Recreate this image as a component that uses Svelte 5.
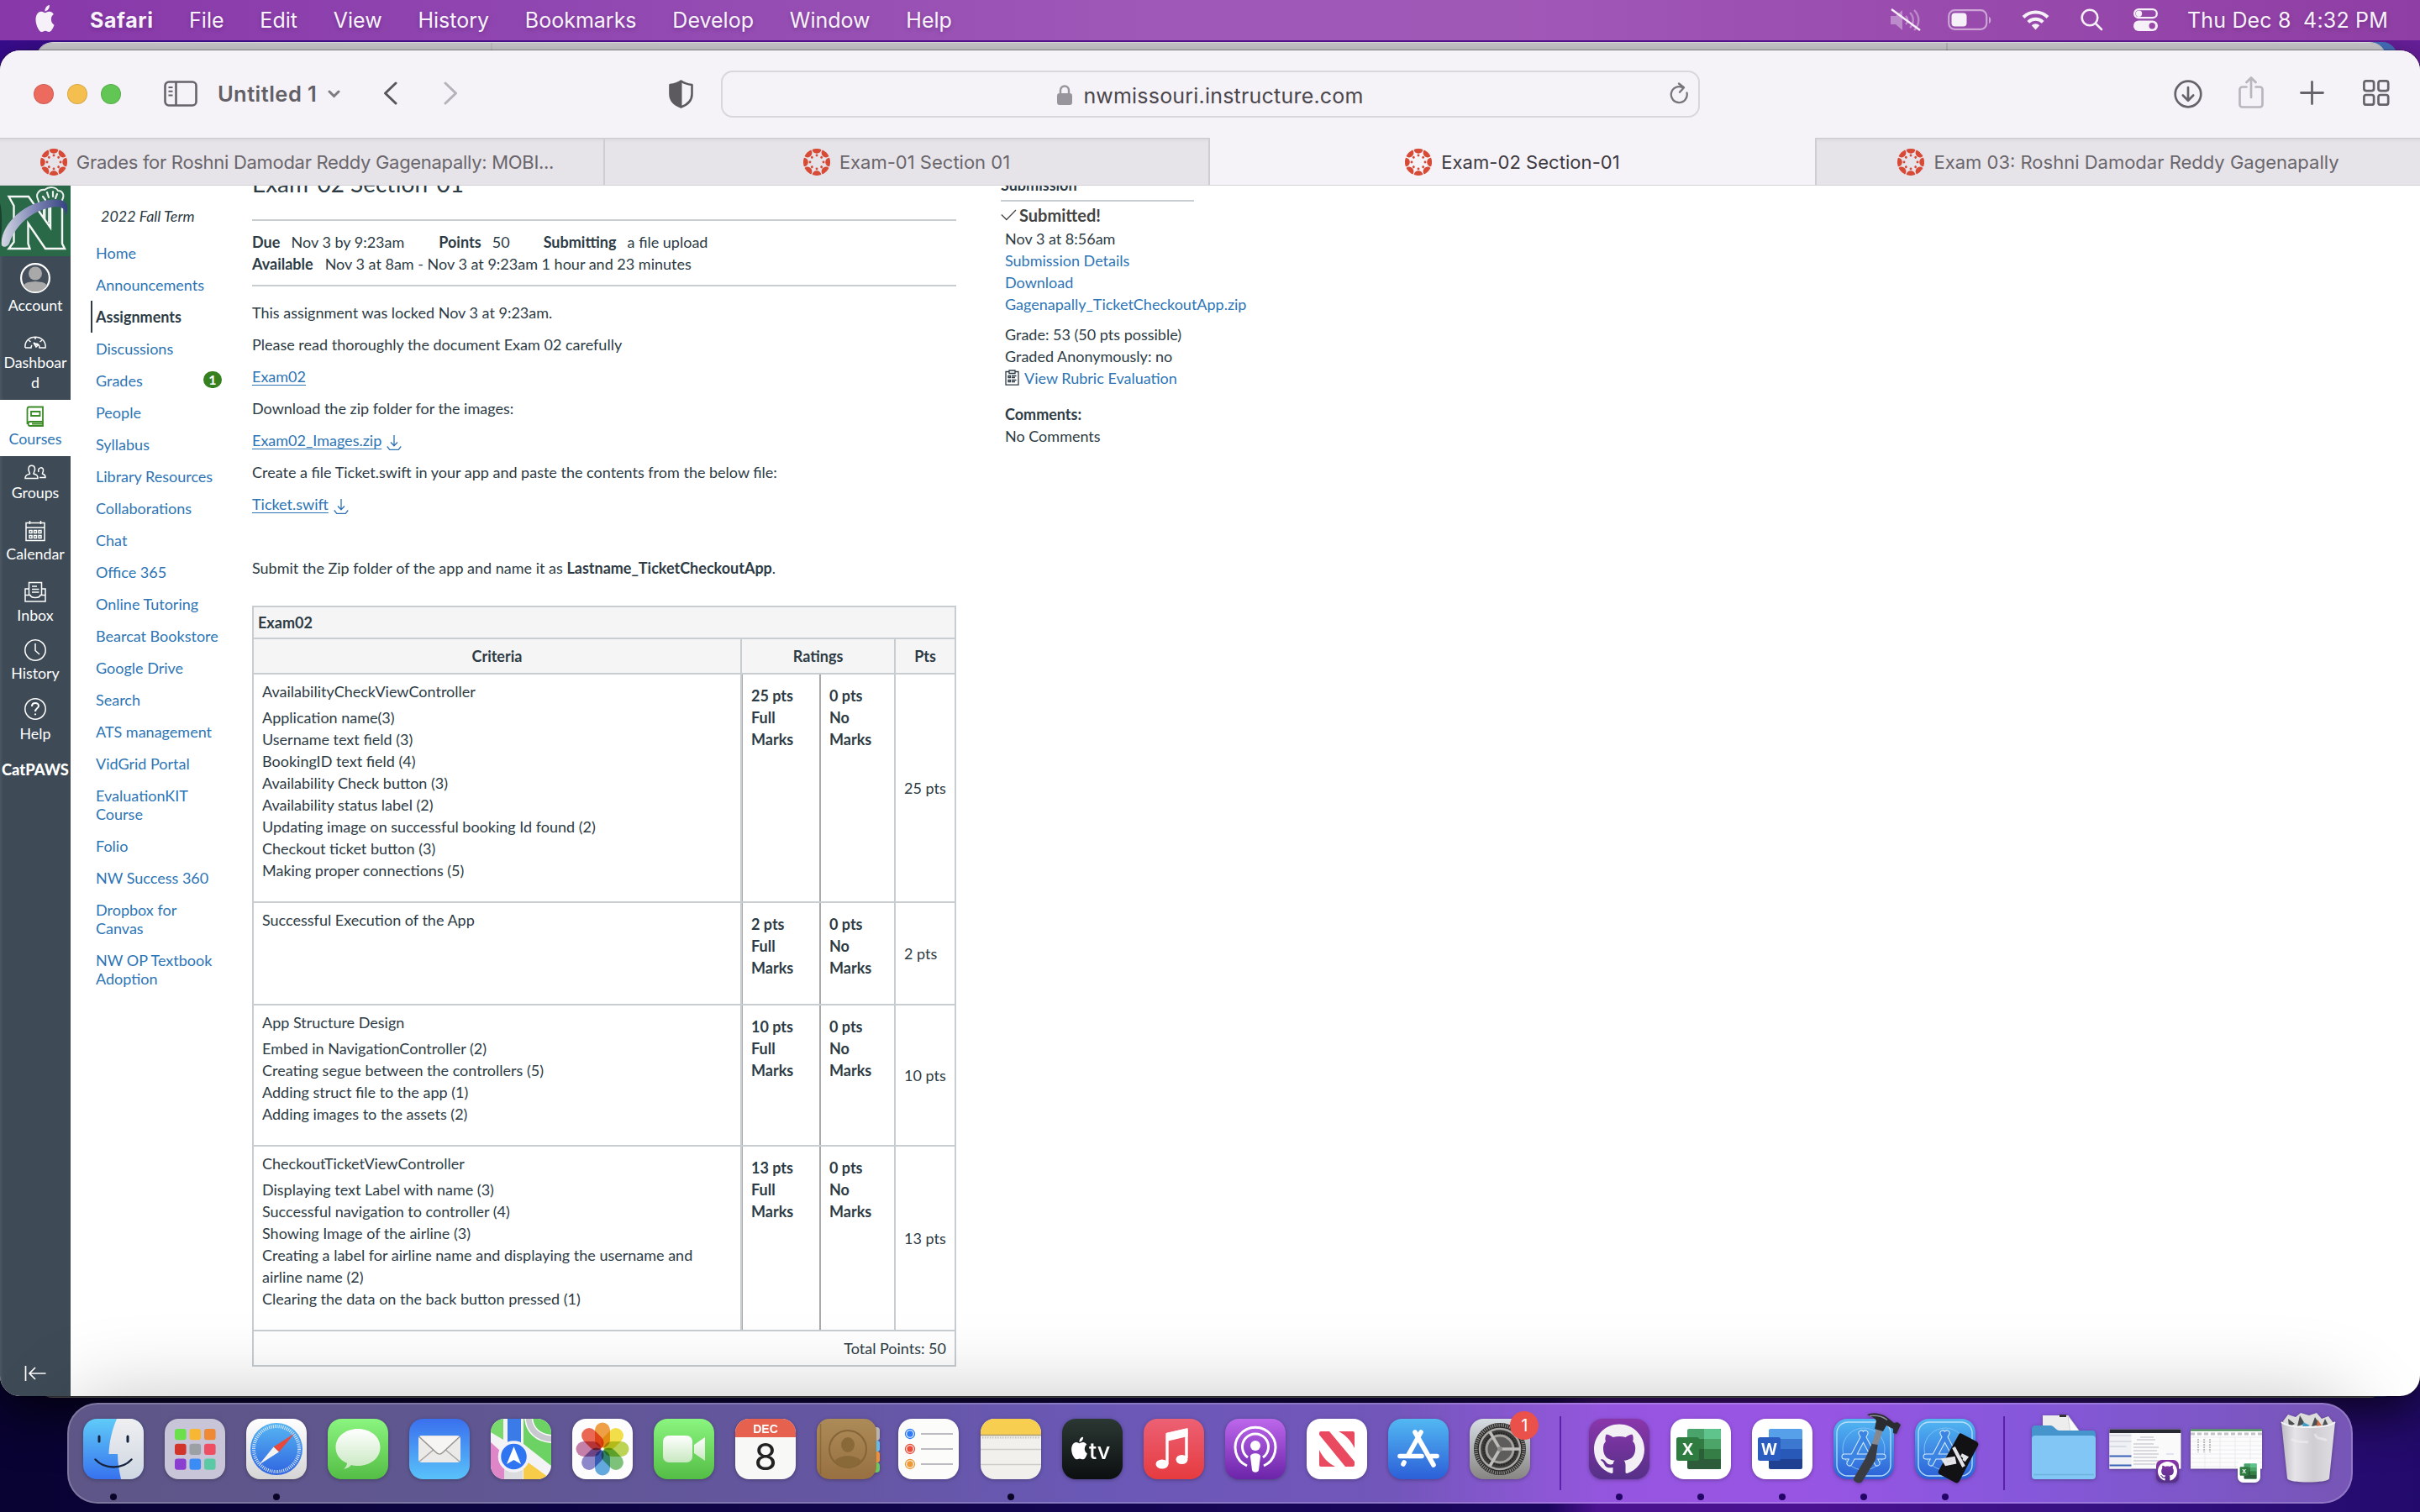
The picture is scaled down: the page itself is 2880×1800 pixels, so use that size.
<script>
  const menus = ['File', 'Edit', 'View', 'History', 'Bookmarks', 'Develop', 'Window', 'Help'];

  const tabs = [
    { title: 'Grades for Roshni Damodar Reddy Gagenapally: MOBI...', cls: 'tight' },
    { title: 'Exam-01 Section 01', cls: '' },
    { title: 'Exam-02 Section-01', cls: 'active' },
    { title: 'Exam 03: Roshni Damodar Reddy Gagenapally', cls: '' }
  ];

  const courseNav = [
    'Home', 'Announcements', 'Assignments', 'Discussions', 'Grades', 'People', 'Syllabus',
    'Library Resources', 'Collaborations', 'Chat', 'Office 365', 'Online Tutoring',
    'Bearcat Bookstore', 'Google Drive', 'Search', 'ATS management', 'VidGrid Portal',
    'EvaluationKIT Course', 'Folio', 'NW Success 360', 'Dropbox for Canvas', 'NW OP Textbook Adoption'
  ];

  const rubric = [
    {
      title: 'AvailabilityCheckViewController', pts: 25,
      lines: ['Application name(3)', 'Username text field (3)', 'BookingID text field (4)', 'Availability Check button (3)',
        'Availability status label (2)', 'Updating image on successful booking Id found (2)', 'Checkout ticket button (3)', 'Making proper connections (5)']
    },
    { title: 'Successful Execution of the App', pts: 2, lines: [] },
    {
      title: 'App Structure Design', pts: 10,
      lines: ['Embed in NavigationController (2)', 'Creating segue between the controllers (5)', 'Adding struct file to the app (1)', 'Adding images to the assets (2)']
    },
    {
      title: 'CheckoutTicketViewController', pts: 13,
      lines: ['Displaying text Label with name (3)', 'Successful navigation to controller (4)', 'Showing Image of the airline (3)',
        'Creating a label for airline name and displaying the username and airline name (2)', 'Clearing the data on the back button pressed (1)']
    }
  ];

  const eighths = [0, 45, 90, 135, 180, 225, 270, 315];
  const petals = ['#f0932b', '#f2dc2e', '#b5cf3f', '#6dbb6a', '#4f9fdc', '#7d79c4', '#c0709f', '#e9533b'];
  const tileColors = ['#6be04a', '#f7b732', '#ee8a35', '#d0342a', '#9aa0a3', '#ee4f63', '#8b3fd0', '#3c8cf5', '#5cc9a5'];
  const tiles = tileColors.map((color, i) => ({ color, x: 12 + (i % 3) * 17.5, y: 12 + Math.floor(i / 3) * 17.7 }));
</script>

{#snippet apple()}
  <path d="M12.152 6.896c-.948 0-2.415-1.078-3.96-1.04-2.04.027-3.91 1.183-4.961 3.014-2.117 3.675-.546 9.103 1.519 12.09 1.013 1.454 2.208 3.09 3.792 3.039 1.52-.065 2.09-.987 3.935-.987 1.831 0 2.35.987 3.96.948 1.637-.026 2.676-1.48 3.676-2.948 1.156-1.688 1.636-3.325 1.662-3.415-.039-.013-3.182-1.221-3.22-4.857-.026-3.04 2.48-4.494 2.597-4.559-1.429-2.09-3.623-2.324-4.39-2.376-2-.156-3.675 1.09-4.61 1.09zM15.53 3.83c.843-1.012 1.4-2.427 1.245-3.83-1.207.052-2.662.805-3.532 1.818-.78.896-1.454 2.338-1.273 3.714 1.338.104 2.715-.688 3.559-1.701" />
{/snippet}

{#snippet octocat()}
  <path d="M8 0C3.58 0 0 3.58 0 8c0 3.54 2.29 6.53 5.47 7.59.4.07.55-.17.55-.38 0-.19-.01-.82-.01-1.49-2.01.37-2.53-.49-2.69-.94-.09-.23-.48-.94-.82-1.13-.28-.15-.68-.52-.01-.53.63-.01 1.08.58 1.23.82.72 1.21 1.87.87 2.33.66.07-.52.28-.87.51-1.07-1.78-.2-3.64-.89-3.64-3.95 0-.87.31-1.59.82-2.15-.08-.2-.36-1.02.08-2.12 0 0 .67-.21 2.2.82.64-.18 1.32-.27 2-.27.68 0 1.36.09 2 .27 1.53-1.04 2.2-.82 2.2-.82.44 1.1.16 1.92.08 2.12.51.56.82 1.27.82 2.15 0 3.07-1.87 3.75-3.65 3.95.29.25.54.73.54 1.48 0 1.07-.01 1.93-.01 2.2 0 .21.15.46.55.38A8.013 8.013 0 0016 8c0-4.42-3.58-8-8-8z" />
{/snippet}

{#snippet favicon()}
  <svg class="favicon" width="32" height="32" viewBox="0 0 32 32" fill="#d64a36">
    {#each eighths as a}
      <g transform="rotate({a} 16 16)">
        <path d="M10.700 .9A16 16 0 0 1 21.300 .9A5.300 4.900 0 0 1 10.700 .9Z" />
        <circle cx="16" cy="8" r="1.450" />
      </g>
    {/each}
  </svg>
{/snippet}

{#snippet download()}
  <svg class="dl" width="18" height="20" viewBox="0 0 18 20" fill="none" stroke="#2d70b0" stroke-width="1.3">
    <path d="M9 1v12M5 9.5l4 4.2 4-4.2M.8 14.5l3 3.8h10.4l3-3.8" />
  </svg>
{/snippet}

{#snippet excelArt()}
  <path d="M22 12h38v48H22z" fill="#21a366" />
  <path d="M40 12h18a2 2 0 0 1 2 2v10H40z" fill="#5fc48c" />
  <path d="M20 14a2 2 0 0 1 2-2h18v12H20z" fill="#4aa36a" />
  <path d="M20 24h20v12H20z" fill="#317a44" /><path d="M40 24h20v12H40z" fill="#4da468" />
  <path d="M20 36h20v12H20z" fill="#2a5f38" /><path d="M40 36h20v12H40z" fill="#357e46" />
  <path d="M20 48h40v10a2 2 0 0 1-2 2H22a2 2 0 0 1-2-2z" fill="#2c5c3a" />
  <rect x="7" y="22" width="27" height="28" rx="2.5" fill="#2f7c41" />
  <text x="20.5" y="43" class="office">X</text>
{/snippet}

{#snippet blueprint()}
  <rect width="72" height="72" rx="16.500" fill="url(#store)" />
  <rect x="4" y="4" width="64" height="64" rx="13" fill="none" stroke="#b8dffa" stroke-width="1.300" />
  <circle cx="36" cy="36" r="25" fill="none" stroke="#7cc0f5" stroke-width="1" />
  <g fill="none" stroke="#d8eefc" stroke-width="7" stroke-linecap="round"><path d="M38 17L19 53M33 17l19 36M13 45h46" /></g>
  <g fill="none" stroke="#3b84e3" stroke-width="5" stroke-linecap="round"><path d="M38 17L19 53M33 17l19 36M13 45h46" /></g>
{/snippet}

<div class="desktop">
  <header class="menubar">
    <svg class="apple" width="27" height="32" viewBox="0 0 24 24" preserveAspectRatio="none" fill="#f6f0f8">{@render apple()}</svg>
    <b class="app">Safari</b>
    {#each menus as m}<span class="menu">{m}</span>{/each}
    <div class="status">
      <svg width="40" height="30" viewBox="0 0 40 30">
        <g fill="#fff" opacity=".35"><path d="M2 10h6l8-7v24l-8-7H2z" /></g>
        <g fill="none" stroke="#fff" stroke-width="2.4" opacity=".35"><path d="M20 10c3 3 3 7 0 10M25 6c5 5 5 13 0 18M30 3c7 7 7 17 0 24" /></g>
        <path d="M3 2l34 25" stroke="#f6f0f8" stroke-width="2.4" />
      </svg>
      <svg class="battery" width="52" height="26" viewBox="0 0 52 26">
        <rect x="1.2" y="1.2" width="45" height="22.6" rx="7" fill="none" stroke="#fff" stroke-width="2.2" opacity=".5" />
        <path d="M49 9c3 1 3 7 0 8z" fill="#fff" opacity=".5" />
        <rect x="4.5" y="4.5" width="18" height="16" rx="4" fill="#f6f0f8" />
      </svg>
      <svg class="wifi" width="33" height="25" viewBox="0 0 33 25" fill="none" stroke="#f6f0f8" stroke-width="4">
        <path d="M2 9.5a20.5 20.5 0 0 1 29 0M7.8 15.3a12.3 12.3 0 0 1 17.4 0" />
        <path d="M16.5 24.5l-4.7-5.2a6.6 6.6 0 0 1 9.4 0z" fill="#f6f0f8" stroke="none" />
      </svg>
      <svg class="find" width="27" height="27" viewBox="0 0 27 27" fill="none" stroke="#f6f0f8" stroke-width="2.6" stroke-linecap="round">
        <circle cx="11" cy="11" r="9.3" /><path d="M18 18l7 7" />
      </svg>
      <svg class="control" width="29" height="27" viewBox="0 0 29 27">
        <rect x="1.2" y="1.2" width="26.6" height="10" rx="5" fill="none" stroke="#f6f0f8" stroke-width="2.3" />
        <circle cx="6.5" cy="6.2" r="3.7" fill="#f6f0f8" />
        <rect x="0" y="14.5" width="29" height="12.5" rx="6.2" fill="#f6f0f8" />
        <circle cx="22.2" cy="20.7" r="3.7" fill="#9946ab" />
      </svg>
      <span class="clock">Thu Dec 8&nbsp; 4:32 PM</span>
    </div>
  </header>

  <div class="rear-edge"></div>
  <div class="rear"><i class="rear-a"></i><i class="rear-b"></i><i class="rear-c"></i></div>

  <section class="window">
    <div class="toolbar">
      <div class="left-tools">
        <i class="light red"></i><i class="light amber"></i><i class="light green"></i>
        <svg class="sidebar-ic" width="40" height="31" viewBox="0 0 40 31" fill="none" stroke="#67636a" stroke-width="2.6">
          <rect x="1.5" y="1.5" width="37" height="28" rx="4.5" /><path d="M14.5 2v27" /><path d="M5.5 8h5M5.5 12.7h5M5.5 17.4h5" stroke-width="2" />
        </svg>
        <span class="group">Untitled 1</span>
        <svg class="chev" width="15" height="10" viewBox="0 0 15 10" fill="none" stroke="#7d7a82" stroke-width="3" stroke-linecap="round"><path d="M2 2l5.5 5.5L13 2" /></svg>
        <svg class="back" width="17" height="28" viewBox="0 0 17 28" fill="none" stroke="#58555b" stroke-width="3" stroke-linecap="round" stroke-linejoin="round"><path d="M15 2L2.5 14 15 26" /></svg>
        <svg class="fwd" width="17" height="28" viewBox="0 0 17 28" fill="none" stroke="#b5b2b9" stroke-width="3" stroke-linecap="round" stroke-linejoin="round"><path d="M2 2l12.500 12L2 26" /></svg>
        <svg class="shield" width="29" height="34" viewBox="0 0 29 34">
          <path d="M14.500 1.500C18 4 23 5.500 27.500 6v11c0 7-5 12.500-13 15.500C6.500 29.500 1.500 24 1.500 17V6C6 5.500 11 4 14.500 1.500z" fill="none" stroke="#5c595f" stroke-width="2.600" stroke-linejoin="round" />
          <path d="M15.500 1.500v31C6.500 29.500 1.500 24 1.500 17V6C6 5.500 11 4 15.500 1.500z" fill="#5c595f" />
        </svg>
      </div>
      <div class="url">
        <svg class="lock" width="18" height="24" viewBox="0 0 18 24"><rect x="0" y="10" width="18" height="14" rx="3" fill="#98959c" /><path d="M4 11V6.500a5 5 0 0 1 10 0V11" fill="none" stroke="#98959c" stroke-width="2.400" /></svg>
        <span>nwmissouri.instructure.com</span>
        <svg class="reload" width="23" height="27" viewBox="0 0 23 27" fill="none" stroke="#77747b" stroke-width="2.300" stroke-linecap="round" stroke-linejoin="round"><path d="M20.500 12.500a9.500 9.500 0 1 1-5.500-6.600M11 1.500l6 4.700-5 5.500" /></svg>
      </div>
      <div class="right-tools">
        <svg width="34" height="34" viewBox="0 0 34 34" fill="none" stroke="#67636a" stroke-width="2.700" stroke-linecap="round" stroke-linejoin="round"><circle cx="17" cy="17" r="15.300" /><path d="M17 9v15.500M10.800 18.500l6.200 6.300 6.200-6.300" /></svg>
        <svg class="share" width="30" height="38" viewBox="0 0 30 38" fill="none" stroke="#b9b6bd" stroke-width="2.700" stroke-linecap="round" stroke-linejoin="round"><path d="M9.500 12.500H4.500a3 3 0 0 0-3 3v18a3 3 0 0 0 3 3h21a3 3 0 0 0 3-3v-18a3 3 0 0 0-3-3h-5M15 25V2M9.500 7L15 1.500 20.500 7" /></svg>
        <svg class="plus" width="29" height="29" viewBox="0 0 29 29" fill="none" stroke="#67636a" stroke-width="2.800" stroke-linecap="round"><path d="M14.500 1.500v26M1.500 14.500h26" /></svg>
        <svg class="grid4" width="32" height="31" viewBox="0 0 32 31" fill="none" stroke="#67636a" stroke-width="2.700"><rect x="1.400" y="1.400" width="11.700" height="11.700" rx="2.500" /><rect x="18.500" y="1.400" width="11.700" height="11.700" rx="2.500" /><rect x="1.400" y="18" width="11.700" height="11.700" rx="2.500" /><rect x="18.500" y="18" width="11.700" height="11.700" rx="2.500" /></svg>
      </div>
    </div>

    <div class="tabs">
      {#each tabs as t}
        <div class="tab {t.cls}">{@render favicon()}<span>{t.title}</span></div>
      {/each}
    </div>

    <div class="page">
      <nav class="global">
        <svg class="logo" width="84" height="85" viewBox="0 0 84 85">
          <rect width="84" height="85" fill="#296948" />
          <path d="M0 22c3 8 3 40-1 52z" fill="#1a4030" />
          <path d="M45 17c-3-6 2-12 8-11 6-5 14-3 16 1 6 0 8 6 5 11 1 4-1 7-1 9v20H52V26l-5-3z" fill="#2f6b4d" stroke="#e8efec" stroke-width="2" stroke-linejoin="round" />
          <path d="M51 14l3 4M56 9l2 6M63 8v6M68 11l-2 5" stroke="#e8efec" stroke-width="2.200" stroke-linecap="round" />
          <path d="M53.500 24v20M58 23v22" stroke="#e8efec" stroke-width="1.800" />
          <path d="M10.500 14H34l26 37V24h14v46l3 6H54L33.500 46v24l2 6H10.500l6-8V25z" fill="#296948" stroke="#f4f7f5" stroke-width="2.400" />
          <path d="M2 72C-1 50 28 18 66 17.500c14 0 17 8 12 20C79 26 70 25 60 27 38 31 18 48 11 70c-2 4-7 5-9 2z" fill="url(#swoosh)" />
        </svg>
        <span class="g account"><svg width="36" height="36" viewBox="0 0 36 36"><circle cx="18" cy="18" r="16.900" fill="#45505c" stroke="#fff" stroke-width="2.200" /><circle cx="18" cy="12.500" r="8" fill="#a9a9a9" /><path d="M4 27c3-5 8-4 14-5 6 1 11 0 14 5a17 17 0 0 1-28 0z" fill="#a9a9a9" /></svg><span>Account</span></span>
        <span class="g dashboard"><svg width="26" height="26" viewBox="0 0 26 26"><path d="M1 21C-1 4 27 4 25 21h-7c0-4-3-5-5-5M1 21h7c0-1 .3-2 1-3M13 8v3M5 12l2.500 2M21 12l-2.500 2M11 15l3 5 2-2z" /></svg><span>Dashboar<br />d</span></span>
        <span class="g courses"><svg width="26" height="26" viewBox="0 0 26 26"><path d="M5 1.500h17V19H6.500c-2.500 0-2.500 5 0 5H22v-5M3.500 22V4c0-1.500.5-2.500 2-2.500M8 7h10.500v5H8zM9 21.500h13" /></svg><span>Courses</span></span>
        <span class="g groups"><svg width="26" height="26" viewBox="0 0 26 26"><path d="M1 21.500c0-5 3-4 5.500-5.500 0-2-2-3-1.500-6 .3-5 7-5 7.500 0 .3 3-1.500 4-1.500 6 2.500 1.500 5 .5 5 5.500zM17 14c-2-6 6-7 5.500-2 0 2-1 2.500-1 4 2 1 3.500.5 3.500 4.500h-7" /></svg><span>Groups</span></span>
        <span class="g calendar"><svg width="26" height="26" viewBox="0 0 26 26"><path d="M2 3.500h22v21H2zM2 9h22M6.500 1v4M19.500 1v4M6 12.500h3v3H6zM11.500 12.500h3v3h-3zM17 12.500h3v3h-3zM6 18.500h3v3H6zM11.500 18.500h3v3h-3zM17 18.500h3v3h-3z" /></svg><span>Calendar</span></span>
        <span class="g inbox"><svg width="26" height="26" viewBox="0 0 26 26"><path d="M5.500 16V1.500h15V16M5.500 9H1v15h24V9h-4.500M1 16.500h6c1 4 11 4 12 0h6M9 6h6M9 9.500h8.500M9 13h8.500" /></svg><span>Inbox</span></span>
        <span class="g history"><svg width="26" height="26" viewBox="0 0 26 26"><circle cx="13" cy="13" r="12.200" /><path d="M13 5v8.500l5 4.500" /></svg><span>History</span></span>
        <span class="g help"><svg width="26" height="26" viewBox="0 0 26 26"><circle cx="13" cy="13" r="12.200" /><path d="M9 10c0-5.500 8-5 8-.8 0 3.300-4 3-4 6.800M13 18.500v1.800" stroke-width="2" /></svg><span>Help</span></span>
        <span class="catpaws">CatPAWS</span>
        <svg class="collapse" width="26" height="20" viewBox="0 0 26 20" fill="none" stroke="#fff" stroke-width="1.700"><path d="M1.500 1v18M25.500 10H6M13 3l-7 7 7 7" /></svg>
      </nav>

      <nav class="course">
        <em>2022 Fall Term</em>
        <ul>
          {#each courseNav as item}
            <li class:current={item === 'Assignments'}>
              <span>{item}</span>{#if item === 'Grades'}<b class="badge">1</b>{/if}
            </li>
          {/each}
        </ul>
      </nav>

      <main>
        <h1>Exam-02 Section-01</h1>
        <div class="details">
          <div class="drow"><b>Due</b><span class="due">Nov 3 by 9:23am</span><b>Points</b><span class="points">50</span><b>Submitting</b><span>a file upload</span></div>
          <div class="drow"><b>Available</b><span>Nov 3 at 8am - Nov 3 at 9:23am 1 hour and 23 minutes</span></div>
        </div>
        <div class="desc">
          <p>This assignment was locked Nov 3 at 9:23am.</p>
          <p>Please read thoroughly the document Exam 02 carefully</p>
          <p><a>Exam02</a></p>
          <p>Download the zip folder for the images:</p>
          <p><a>Exam02_Images.zip</a>{@render download()}</p>
          <p>Create a file Ticket.swift in your app and paste the contents from the below file:</p>
          <p><a>Ticket.swift</a>{@render download()}</p>
          <p>&nbsp;</p>
          <p>Submit the Zip folder of the app and name it as <b>Lastname_TicketCheckoutApp</b>.</p>
        </div>
        <div class="rubric">
          <div class="caption">Exam02</div>
          <div class="row head"><span>Criteria</span><span>Ratings</span><span>Pts</span></div>
          {#each rubric as r}
            <div class="row">
              <div class="crit">
                <div class="ctitle">{r.title}</div>
                {#each r.lines as l}<div>{l}</div>{/each}
              </div>
              <div class="ratings">
                <div class="full">{r.pts} pts<br />Full<br />Marks</div>
                <div class="none">0 pts<br />No<br />Marks</div>
              </div>
              <div class="pts">{r.pts} pts</div>
            </div>
          {/each}
          <div class="total">Total Points: 50</div>
        </div>
      </main>

      <aside>
        <h2>Submission</h2>
        <div class="submitted">
          <svg width="19" height="14" viewBox="0 0 19 14" fill="none" stroke="#444" stroke-width="1.300"><path d="M.8 6.500l6 6L18 1" /></svg>
          <b>Submitted!</b>
        </div>
        <div class="info">
          <div>Nov 3 at 8:56am</div>
          <a>Submission Details</a>
          <a>Download</a>
          <a>Gagenapally_TicketCheckoutApp.zip</a>
          <div class="grade">Grade: 53 (50 pts possible)</div>
          <div>Graded Anonymously: no</div>
          <a class="rub"><svg width="17" height="19" viewBox="0 0 17 19" fill="none" stroke="#2d3b45" stroke-width="1.300"><path d="M1 2.500h15v15.700H1z" /><path d="M5 4.500V1h7v3.500z" fill="#fff" /><path d="M4 7.500h2.500v2H4zM4 12.500h2.500v2H4zM8 7.500h5.500M8 9.500h4M8 12.500h5.500M8 14.500h4" /></svg><span>View Rubric Evaluation</span></a>
          <b class="comments">Comments:</b>
          <div>No Comments</div>
        </div>
      </aside>
    </div>
    <div class="dock-shade"><i></i></div>
  </section>

  <footer class="dock">
    <div class="cell run">
      <svg class="icon" viewBox="0 0 72 72">
        <defs>
          <clipPath id="sq"><rect width="72" height="72" rx="16.500" /></clipPath>
          <linearGradient id="blueDown" x2="0" y2="1"><stop stop-color="#5fcbf8" /><stop offset="1" stop-color="#3772ee" /></linearGradient>
          <linearGradient id="pale" x2="0" y2="1"><stop stop-color="#efeff1" /><stop offset="1" stop-color="#ced7e2" /></linearGradient>
          <linearGradient id="compass" x2="0" y2="1"><stop stop-color="#57b6f3" /><stop offset="1" stop-color="#2f64e0" /></linearGradient>
          <linearGradient id="whiteDown" x2="0" y2="1"><stop stop-color="#fff" /><stop offset="1" stop-color="#d5d5d5" /></linearGradient>
          <linearGradient id="greenDown" x2="0" y2="1"><stop stop-color="#8af57f" /><stop offset="1" stop-color="#54bd45" /></linearGradient>
          <linearGradient id="bubble" x2="0" y2="1"><stop stop-color="#fff" /><stop offset="1" stop-color="#c8e8c0" /></linearGradient>
          <linearGradient id="mail" x2="0" y2="1"><stop stop-color="#3a70ee" /><stop offset="1" stop-color="#59c2fa" /></linearGradient>
          <linearGradient id="redDown" x2="0" y2="1"><stop stop-color="#ec6174" /><stop offset="1" stop-color="#e63b3f" /></linearGradient>
          <linearGradient id="podcast" x2="0" y2="1"><stop stop-color="#bd67ec" /><stop offset="1" stop-color="#6b24a8" /></linearGradient>
          <linearGradient id="store" x2="0" y2="1"><stop stop-color="#52b8f2" /><stop offset="1" stop-color="#2c5fd8" /></linearGradient>
          <linearGradient id="steel" x2="0" y2="1"><stop stop-color="#d6dde3" /><stop offset="1" stop-color="#878582" /></linearGradient>
          <linearGradient id="github" x2="0" y2="1"><stop stop-color="#8a36ab" /><stop offset="1" stop-color="#553087" /></linearGradient>
          <linearGradient id="tvbg" x2="0" y2="1"><stop stop-color="#2b3733" /><stop offset="1" stop-color="#0c0f10" /></linearGradient>
          <linearGradient id="book" x2="0" y2="1"><stop stop-color="#ac8b58" /><stop offset="1" stop-color="#987041" /></linearGradient>
          <linearGradient id="bin"><stop stop-color="#bdbbc2" /><stop offset=".25" stop-color="#e6e4e8" /><stop offset=".6" stop-color="#cfcdd2" /><stop offset="1" stop-color="#e0dee3" /></linearGradient>
          <linearGradient id="swoosh"><stop stop-color="#d3d7e4" /><stop offset=".5" stop-color="#8087b6" /><stop offset="1" stop-color="#34427f" /></linearGradient>
        </defs>
        <g clip-path="url(#sq)">
          <rect width="72" height="72" fill="url(#blueDown)" />
          <path d="M40 0C34 14 31 28 30.500 42H41c0 10 2 21 4 30h27V0z" fill="url(#pale)" />
        </g>
        <path d="M19 21v6M53 21v6" stroke="#16233c" stroke-width="3" stroke-linecap="round" />
        <path d="M14.500 48.500c11 12 32 12 43 0" fill="none" stroke="#16233c" stroke-width="2.400" stroke-linecap="round" />
      </svg>
    </div>
    <div class="cell">
      <svg class="icon" viewBox="0 0 72 72">
        <rect width="72" height="72" rx="16.500" fill="#c9c5d8" />
        {#each tiles as t}<rect x={t.x} y={t.y} width="13.600" height="13.300" rx="3" fill={t.color} />{/each}
      </svg>
    </div>
    <div class="cell run">
      <svg class="icon" viewBox="0 0 72 72">
        <rect width="72" height="72" rx="16.500" fill="url(#whiteDown)" />
        <circle cx="36" cy="36" r="31" fill="url(#compass)" />
        <circle cx="36" cy="36" r="27" fill="none" stroke="#e8f2fd" stroke-width="4" stroke-dasharray=".9 1.456" />
        <path d="M57.500 17.500L32.500 33.500 39 39.500z" fill="#e8493c" /><path d="M15.500 54.500L32.500 33.500 39 39.500z" fill="#f3f3f3" />
      </svg>
    </div>
    <div class="cell">
      <svg class="icon" viewBox="0 0 72 72">
        <rect width="72" height="72" rx="16.500" fill="url(#greenDown)" />
        <path d="M36 12c15 0 26.500 9.500 26.500 22S51 56 36 56c-3 0-6-.4-8-1-2 2.500-5 4.500-9 4.800 2.500-2 4-4.500 4-7C14 49 9.500 42 9.500 34 9.500 21.500 21 12 36 12z" fill="url(#bubble)" />
      </svg>
    </div>
    <div class="cell">
      <svg class="icon" viewBox="0 0 72 72">
        <rect width="72" height="72" rx="16.500" fill="url(#mail)" />
        <rect x="11" y="20" width="50" height="32" rx="4" fill="#eceae8" />
        <path d="M12 51l18-15M60 51L42 36" stroke="#a8a5a2" stroke-width="1.500" />
        <path d="M12 21.500l20.500 19c2 2 5 2 7 0l20.500-19" fill="#f6f5f4" stroke="#96938f" stroke-width="1.500" />
      </svg>
    </div>
    <div class="cell">
      <svg class="icon" viewBox="0 0 72 72">
        <g clip-path="url(#sq)">
          <rect width="72" height="72" fill="#f3f3f5" />
          <path d="M0 6v10l15 9V0H6z" fill="#79d96c" />
          <path d="M39 0h33v56L39 30z" fill="#6dd264" />
          <path d="M0 28l22 20v24H0z" fill="#df86c9" />
          <path d="M16 48h22v24H16z" fill="#dcdce0" />
          <path d="M39 72V48l33 24z" fill="#f6cc48" />
          <path d="M20 0h16v50H20z" fill="#3b7be8" />
          <path d="M45-4c0 17 11 28 30 28" fill="none" stroke="#fff" stroke-width="10" /><path d="M45-4c0 17 11 28 30 28" fill="none" stroke="#c8c8cf" stroke-width="7" />
        </g>
        <circle cx="27.500" cy="45" r="17" fill="#2f74f0" stroke="#f2f2f8" stroke-width="3.500" />
        <path d="M27.500 33l8.500 21-8.500-5-8.500 5z" fill="#fff" />
      </svg>
    </div>
    <div class="cell">
      <svg class="icon" viewBox="0 0 72 72">
        <rect width="72" height="72" rx="16.500" fill="#fdfdfd" />
        {#each petals as color, i}<rect class="petal" x="27" y="4.500" width="18" height="30" rx="9" fill={color} transform="rotate({i * 45} 36 36)" />{/each}
        <circle cx="36" cy="36" r="1.500" fill="#fff" />
      </svg>
    </div>
    <div class="cell">
      <svg class="icon" viewBox="0 0 72 72">
        <rect width="72" height="72" rx="16.500" fill="url(#greenDown)" />
        <rect x="11" y="20" width="35" height="32" rx="7" fill="url(#bubble)" /><path d="M48 31l13-9v28l-13-9z" fill="url(#bubble)" />
      </svg>
    </div>
    <div class="cell">
      <svg class="icon" viewBox="0 0 72 72">
        <g clip-path="url(#sq)"><rect width="72" height="72" fill="#f8f8f7" /><rect width="72" height="22" fill="#e7614f" /></g>
        <text x="36" y="17" class="month">DEC</text><text x="36" y="61" class="day">8</text>
      </svg>
    </div>
    <div class="cell">
      <svg class="icon" viewBox="0 0 72 72">
        <rect x="62" y="10" width="13" height="16" rx="4" fill="#b9b5ae" /><rect x="62" y="26" width="13" height="13" rx="3" fill="#63bbe8" /><rect x="62" y="39" width="13" height="13" rx="3" fill="#ee9035" /><rect x="62" y="52" width="13" height="12" rx="4" fill="#6bc85c" />
        <rect width="71" height="72" rx="15" fill="url(#book)" /><path d="M4.500 6v60" stroke="#7d5c30" stroke-width="1.500" opacity=".6" />
        <circle cx="37" cy="36" r="22" fill="none" stroke="#856537" stroke-width="2" /><ellipse cx="37" cy="31" rx="8" ry="9" fill="#8a6938" /><path d="M21 51c4-9 28-9 32 0a22 22 0 0 1-32 0z" fill="#8a6938" />
      </svg>
    </div>
    <div class="cell">
      <svg class="icon" viewBox="0 0 72 72">
        <rect width="72" height="72" rx="16.500" fill="#fcfcfb" />
        <g fill="none" stroke-width="1.300"><circle cx="14" cy="18" r="5.500" stroke="#2f7cf6" /><circle cx="14" cy="36" r="5.500" stroke="#e8503c" /><circle cx="14" cy="54" r="5.500" stroke="#ec9936" /></g>
        <circle cx="14" cy="18" r="3.700" fill="#2f7cf6" /><circle cx="14" cy="36" r="3.700" fill="#e8503c" /><circle cx="14" cy="54" r="3.700" fill="#ec9936" />
        <path d="M27 18h38M27 36h38M27 54h38" stroke="#bcbbbf" stroke-width="2" />
      </svg>
    </div>
    <div class="cell run">
      <svg class="icon" viewBox="0 0 72 72">
        <g clip-path="url(#sq)"><rect width="72" height="72" fill="#f1f0ed" /><rect width="72" height="19" fill="#f8ce51" /><path d="M0 19.500h72" stroke="#a99d77" stroke-width="1.500" /></g>
        <path d="M2 22.500h68" stroke="#c5c3bd" stroke-width="2" stroke-dasharray="1.500 1.500" /><path d="M0 36.500h72M0 54.500h72" stroke="#cdccc8" stroke-width="1.500" />
      </svg>
    </div>
    <div class="cell">
      <svg class="icon" viewBox="0 0 72 72">
        <rect width="72" height="72" rx="16.500" fill="url(#tvbg)" />
        <svg x="9" y="21.500" width="23" height="27" viewBox="0 0 24 24" preserveAspectRatio="none" fill="#fff">{@render apple()}</svg>
        <text x="32" y="47.500" class="tv">tv</text>
      </svg>
    </div>
    <div class="cell">
      <svg class="icon" viewBox="0 0 72 72">
        <rect width="72" height="72" rx="16.500" fill="url(#redDown)" />
        <path d="M28 54V18.500l23-5V47" fill="none" stroke="#fff" stroke-width="3.400" stroke-linejoin="round" /><path d="M27 17l25.500-6v10L27 27z" fill="#fff" />
        <ellipse cx="22" cy="54" rx="7.500" ry="5.500" fill="#fff" /><ellipse cx="45.500" cy="48.500" rx="7" ry="5.500" fill="#fff" />
      </svg>
    </div>
    <div class="cell">
      <svg class="icon" viewBox="0 0 72 72">
        <rect width="72" height="72" rx="16.500" fill="url(#podcast)" />
        <g fill="none" stroke="#fff" stroke-width="3"><path d="M26 56a24 24 0 1 1 20 0" /><path d="M27 46a15.500 15.500 0 1 1 18 0" /></g>
        <circle cx="36" cy="32" r="6" fill="#fff" /><path d="M30 45c0-5 12-5 12 0l-2 16c-.6 3.500-7.400 3.500-8 0z" fill="#fff" />
      </svg>
    </div>
    <div class="cell">
      <svg class="icon" viewBox="0 0 72 72">
        <rect width="72" height="72" rx="16.500" fill="#fff" />
        <path d="M15 17a2 2 0 0 1 2-2h10l30 36v4a2 2 0 0 1-2 2H46L15 19z" fill="#ea4a60" />
        <path d="M38 15h17a2 2 0 0 1 2 2v18C53 26 46 19 38 15zM34 57H17a2 2 0 0 1-2-2V37c4 9 11 16 19 20z" fill="#ea4a60" />
      </svg>
    </div>
    <div class="cell">
      <svg class="icon" viewBox="0 0 72 72">
        <rect width="72" height="72" rx="16.500" fill="url(#store)" />
        <g stroke="#fff" stroke-width="5.600" stroke-linecap="round"><path d="M39 16L24 43M32 16l22 39M14 44.500h26M51 44.500h7M19 52l-1 2" /></g>
      </svg>
    </div>
    <div class="cell">
      <svg class="icon" viewBox="0 0 72 72">
        <rect width="72" height="72" rx="16.500" fill="url(#steel)" />
        <circle cx="36" cy="36" r="31" fill="#2b2c2a" /><circle cx="36" cy="36" r="28.500" fill="#2b2c2a" stroke="#8f8e8a" stroke-width="4" stroke-dasharray="1.200 1.400" />
        <circle cx="36" cy="36" r="24" fill="#3b3b39" stroke="#a9a8a5" stroke-width="2.500" /><circle cx="36" cy="36" r="16" fill="#5d5d5b" stroke="#a3a29f" stroke-width="3" /><circle cx="36" cy="36" r="19" fill="none" stroke="#222" stroke-width="2" stroke-dasharray="1.500 1.500" />
        <path d="M36 36h24M36 36L24 15.500M36 36L24 56.500" stroke="#bebdba" stroke-width="3.500" /><circle cx="36" cy="36" r="3" fill="#8d8c8a" />
      </svg>
      <b class="notice">1</b>
    </div>
    <i class="sep"></i>
    <div class="cell run">
      <svg class="icon" viewBox="0 0 72 72">
        <rect width="72" height="72" rx="16.500" fill="url(#github)" />
        <svg x="6" y="6" width="60" height="61" viewBox="0 0 16 16" fill="#f2f0f5">{@render octocat()}</svg>
      </svg>
    </div>
    <div class="cell run">
      <svg class="icon" viewBox="0 0 72 72"><rect width="72" height="72" rx="16.500" fill="#fff" />{@render excelArt()}</svg>
    </div>
    <div class="cell run">
      <svg class="icon" viewBox="0 0 72 72">
        <rect width="72" height="72" rx="16.500" fill="#fff" />
        <path d="M20 14a2 2 0 0 1 2-2h36a2 2 0 0 1 2 2v10H20z" fill="#56a0ea" /><path d="M20 24h40v12H20z" fill="#3d78d0" /><path d="M20 36h40v12H20z" fill="#2858b8" /><path d="M20 48h40v10a2 2 0 0 1-2 2H22a2 2 0 0 1-2-2z" fill="#204191" />
        <rect x="7" y="22" width="27" height="28" rx="2.500" fill="#2b5cc0" /><text x="20.500" y="43" class="office">W</text>
      </svg>
    </div>
    <div class="cell run">
      <svg class="icon" viewBox="0 0 72 72">
        {@render blueprint()}
        <path d="M53 30L44 34 22 72c-1 3 6 6 8 3L50 50z" fill="none" />
        <path d="M50 34l-9 20-14 18" fill="none" stroke="none" />
        <path d="M46 29h7l-3 20-16 26c-3 3-11 0-10-4l14-24z" fill="#393c42" />
        <path d="M52 8l8 2-7 21-7-1z" fill="#85888e" />
        <path d="M40-5c9-3 19-1 26 5l6 5 4-1 4 3-5 11-4-1v-5l-8-4-4 7-10-3 2-10c-3-4-7-5-11-7z" fill="#2a2c30" />
        <path d="M43-3.500c8-1 15 0 21 5" stroke="#8b8f96" stroke-width="1.500" fill="none" />
      </svg>
    </div>
    <div class="cell run">
      <svg class="icon" viewBox="0 0 72 72">
        {@render blueprint()}
        <path d="M52 19c1-2 2-2 4-1l17 9c2 1 3 3 2 5L53 74c-1 2-3 3-5 2l-17-9c-3-1-4-3-3-5z" fill="#121214" />
        <path d="M46 34l12 23M55 43l6 3-3 4M34 49l12-2 1 5-10 2z" stroke="#e4e5e8" stroke-width="4" fill="#d6d7da" />
      </svg>
    </div>
    <i class="sep second"></i>
    <div class="cell">
      <svg class="icon" viewBox="0 0 72 72">
        <path d="M11 18V-4h30l16 26z" fill="#ededed" /><path d="M41-4l16 22H44z" fill="#fbfbfb" stroke="#c9c9c9" stroke-width=".8" /><path d="M31-5h8v3h-8z" fill="#333" />
        <path d="M-2 13c0-4 2-5 5-5h17c5 0 6 6 11 6h39c3 0 4 2 4 5v12H-2z" fill="#4594cb" />
        <rect x="-2" y="20" width="76" height="52" rx="4" fill="#82c6f5" /><path d="M0 66.500h72" stroke="#6fb2e0" stroke-width="1.500" />
      </svg>
    </div>
    <div class="cell">
      <svg class="icon" viewBox="0 0 72 72">
        <rect x="-6.500" y="12.500" width="85" height="47" fill="#fafafa" /><rect x="-6.500" y="12.500" width="85" height="4.500" fill="#272a33" />
        <path d="M-6.500 17h26v42.500h-26z" fill="#f0f1f5" /><path d="M-6.500 20h26M-6.500 27h26M-6.500 33h20" stroke="#b7bccd" stroke-width=".8" /><path d="M-6.500 44.500h26M-6.500 55.500h26" stroke="#3a62b8" stroke-width="2" />
        <path d="M30 22h16M26 25h22M22 30h24M22 34h30M22 38h28M22 42h30M22 46h28M22 50h30M22 54h26" stroke="#b6b9c2" stroke-width="1" /><path d="M61 42h9" stroke="#c6ccea" />
        <rect x="49" y="49" width="27" height="27" rx="6.500" fill="url(#github)" /><svg x="51" y="51" width="23" height="23" viewBox="0 0 16 16" fill="#fff">{@render octocat()}</svg>
      </svg>
    </div>
    <div class="cell">
      <svg class="icon" viewBox="0 0 72 72">
        <rect x="-7" y="12.500" width="85" height="47" fill="#fcfcfc" /><rect x="-7" y="12.500" width="85" height="2" fill="#2f7c41" /><path d="M-7 18h85" stroke="#c4c4c8" stroke-width="3" stroke-dasharray="5 3" /><path d="M-7 22h85M-7 27h85M-7 32h85M-7 37h85M-7 42h85M-7 47h85M-7 52h85M-7 57h85M10 22v37M28 22v37M46 22v37M64 22v37" stroke="#e9e9ec" stroke-width=".8" />
        <path d="M2 24v16M9 24v16M16 24v16" stroke="#888" stroke-width="1" stroke-dasharray="2 1" />
        <rect x="49" y="49" width="27" height="27" rx="6.500" fill="#fff" /><svg x="49" y="49" width="27" height="27" viewBox="0 0 72 72">{@render excelArt()}</svg>
      </svg>
    </div>
    <div class="cell">
      <svg class="icon" viewBox="0 0 72 72">
        <path d="M6 3l6-8 9 3 6-5 10 3 9-3 6 7 8-3 6 8-4 9H10z" fill="#dcdcda" />
        <path d="M12 0l8 6-7 4zM26-4l6 10-9 3zM44-2l6 9-10 2zM56 0l4 8-8 2z" fill="#4c4f52" /><path d="M30 4l8 4-9 3z" fill="#3ea0c8" /><path d="M47 1l5 7-6 1z" fill="#cf6a42" />
        <path d="M4 4c10 8 54 8 64 0l-7 67c-.5 6-49.500 6-50 0z" fill="url(#bin)" /><path d="M4 4c10 8 54 8 64 0" fill="none" stroke="#f4f4f6" stroke-width="2" />
        <path d="M16 24c8 6 14 2 20 4M44 18c2 8 10 4 14 8" stroke="#f0eff2" stroke-width="3" opacity=".6" fill="none" />
      </svg>
    </div>
  </footer>
</div>

<style>
  :global(body) { margin: 0; overflow: hidden; }
  .desktop {
    position: relative; width: 2880px; height: 1800px; overflow: hidden; box-sizing: border-box;
    font-family: Inter, "Liberation Sans", sans-serif; color: #2d3b45;
    background:
      linear-gradient(90deg, #3a0c92 0, #5c149a 30%, #5c149a 70%, #6b209f 100%) 0 0 / 100% 110px no-repeat,
      linear-gradient(90deg, #090333 0, #0b0440 20%, #13054f 45%, #1b065e 64%, #4b128f 66%, #4a1190 75%, #33107f 88%, #220a6b 100%);
  }
  svg { display: block; flex: none; }

  .menubar {
    height: 48px; display: flex; align-items: center; padding-left: 40px; position: relative; z-index: 2; box-sizing: border-box; padding-bottom: 1px;
    background: linear-gradient(90deg, #8838a9 0, #9148b1 25%, #9f58b7 48%, #a058b7 62%, #9748ab 85%, #8e3ea4 100%);
    color: #f8f3fa; font-size: 25px; text-shadow: 0 2px 5px rgba(60, 0, 80, .3);
  }
  .apple { margin: -4px 40px 0 0; }
  .app { font-weight: 700; letter-spacing: .6px; margin-right: 42.500px; }
  .menu { margin-right: 42.800px; white-space: nowrap; }
  .status { margin-left: auto; display: flex; align-items: center; padding-right: 38px; }
  .battery { margin-left: 30px; }
  .wifi { margin-left: 36px; }
  .find { margin-left: 37px; }
  .control { margin-left: 36px; }
  .clock { margin-left: 35px; letter-spacing: .18px; white-space: nowrap; }

  .rear-edge { position: absolute; left: 2700px; top: 50px; width: 153px; height: 1613px; border-radius: 18px; background: #4a76c6; }
  .rear { position: absolute; left: 43px; top: 50px; width: 2797px; height: 1614px; box-sizing: border-box; border-radius: 20px; overflow: hidden; background: #8f8f94; display: flex; border-top: 1px solid #f2f2f4; }
  .rear i { height: 40px; background: #dcdcdf; }
  .rear-a { width: 541px; border-right: 2px solid #cfcfd3; }
  .rear-b { width: 1730px; border-right: 2px solid #c4c4c8; }
  .rear-c { flex: 1; }

  .window { position: absolute; left: 0; top: 60px; width: 2880px; height: 1602px; border-radius: 24px; overflow: hidden; background: #fff; display: flex; flex-direction: column; box-shadow: 0 0 0 1px rgba(0, 0, 0, .3), 0 20px 60px rgba(0, 0, 0, .75); }
  .toolbar { height: 104px; flex: none; display: grid; grid-template-columns: 858px 1165px 857px; background: #f5f2f8; }
  .left-tools, .right-tools { display: flex; align-items: center; }
  .left-tools { padding-left: 39.500px; }
  .light { width: 24px; height: 24px; border-radius: 50%; margin-right: 16.300px; box-sizing: border-box; border: 1px solid rgba(0, 0, 0, .12); }
  .red { background: #ed6a5f; }
  .amber { background: #f5bf4f; }
  .green { background: #62c655; }
  .sidebar-ic { margin-left: 34.500px; margin-top: -2px; }
  .group { width: 120px; margin-left: 24px; font-size: 25.500px; font-weight: 600; color: #625f66; letter-spacing: .45px; white-space: nowrap; margin-top: -2px; }
  .chev { margin-left: 11px; }
  .back { margin-left: 51.500px; margin-top: -2px; }
  .fwd { margin-left: 55px; margin-top: -2px; }
  .shield { margin-left: 250.500px; }
  .url { position: relative; margin: 24px 0; border: 2px solid #d9d6dc; border-radius: 14px; box-sizing: border-box; display: flex; align-items: center; justify-content: center; gap: 13px; font-size: 25px; color: #4a474d; letter-spacing: .2px; }
  .url span { padding-top: 4px; }
  .lock { margin-top: 2px; }
  .reload { position: absolute; right: 11px; top: 12px; }
  .right-tools { padding-left: 563.500px; }
  .share { margin: -4px 0 0 43px; }
  .plus { margin-left: 43.500px; margin-top: -3px; }
  .grid4 { margin-left: 46px; margin-top: -3px; }

  .tabs { height: 57px; flex: none; display: flex; box-sizing: border-box; border-bottom: 1px solid #d5d2d7; position: relative; z-index: 1; }
  .tab { width: 720px; box-sizing: border-box; border-right: 2px solid #d0cdd2; display: flex; align-items: center; justify-content: center; gap: 11px; font-size: 22px; color: #69666c; background: linear-gradient(#c6c3c9 0, #dfdce1 2px, #e7e4e9 6px); white-space: nowrap; padding-top: 1px; }
  .tab.active { background: #f5f2f8; color: #3b383e; letter-spacing: .05px; border-right: 0; }
  .tab.tight { letter-spacing: -.3px; padding-right: 11px; }
  .tab:last-child { border-right: 0; border-left: 2px solid #d0cdd2; }

  .page { flex: 1; min-height: 0; display: flex; font-family: Lato, "Liberation Sans", sans-serif; font-size: 18px; line-height: 26px; overflow: hidden; }
  .global { width: 84px; flex: none; background: linear-gradient(90deg, #4a5763 0, #3e4b57 4px); color: #fff; display: flex; flex-direction: column; align-items: center; }
  .logo { margin-top: -1px; }
  .g { width: 84px; box-sizing: border-box; display: flex; flex-direction: column; align-items: center; gap: 2px; line-height: 24px; font-size: 17.800px; text-align: center; }
  .g svg { fill: none; stroke: #fff; stroke-width: 1.500; }
  .account { height: 84px; padding-top: 8px; }
  .account svg { stroke: none; }
  .dashboard { height: 87px; padding-top: 4px; gap: 0; }
  .courses { height: 67px; padding-top: 7px; gap: 1px; background: #fff; color: #2d75b5; }
  .courses svg { stroke: #3a8a25; stroke-width: 1.800; }
  .groups { height: 72px; padding-top: 5px; gap: 0; }
  .calendar { height: 74px; padding-top: 4px; }
  .inbox { height: 69px; padding-top: 3px; gap: 2px; }
  .history { height: 69px; padding-top: 3px; }
  .help { height: 77px; padding-top: 4px; gap: 4px; }
  .catpaws { line-height: 24px; font-family: Lato, sans-serif; font-weight: 900; font-size: 18.300px; height: 32px; }
  .collapse { margin-top: auto; margin-bottom: 17px; }

  .course { width: 198px; padding: 23px 0 0 24px; flex: none; box-sizing: border-box; font-size: 18px; line-height: 22px; }
  .course em { display: block; padding: 2px 0 14px 12px; font-size: 17.900px; }
  .course ul { list-style: none; margin: 0; padding: 0; }
  .course li { display: flex; align-items: center; padding: 8px 0 8px 4px; border-left: 2px solid transparent; color: #2d75b5; }
  .course li span { max-width: 148px; }
  .course li.current { border-color: #2d3b45; color: #2d3b45; font-weight: 700; }
  .badge { width: 22px; height: 20px; border-radius: 10px; background: #36801f; color: #fff; font-size: 16px; line-height: 19px; text-align: center; margin: -2px 18px 0 auto; }

  main { width: 838px; margin-left: 18px; flex: none; }
  h1 { margin: -21px 0 0; font-weight: 400; font-size: 28px; line-height: 36px; padding-bottom: 25px; height: 36px; }
  .details { border-top: 2px solid #c7cdd1; border-bottom: 2px solid #c7cdd1; padding: 12px 0 12px; }
  .drow { display: flex; height: 26px; white-space: pre; }
  .drow b { margin-right: 14px; }
  .drow:first-child b { margin-right: 13.200px; }
  .due { margin-right: 41px; }
  .points { margin-right: 40px; }
  .desc { padding-top: 18px; }
  p { margin: 0 0 12px; height: 26px; display: flex; white-space: pre; }
  a { color: #2d75b5; }
  p a { text-decoration: underline; text-decoration-thickness: 1px; text-underline-offset: 3px; }
  .dl { margin: 6px 0 0 6px; }

  .rubric { margin-top: 32px; border: 2px solid #c7cdd1; }
  .caption { height: 36px; line-height: 36px; padding-left: 5px; font-weight: 700; background: #f5f5f5; border-bottom: 2px solid #c7cdd1; }
  .row { display: grid; grid-template-columns: 581px 183px 70px; border-bottom: 2px solid #c7cdd1; }
  .head { height: 40px; line-height: 41px; background: #f5f5f5; font-weight: 700; text-align: center; }
  .head span:not(:last-child) { border-right: 2px solid #c7cdd1; }
  .crit { padding: 7px 48px 24px 10px; border-right: 2px solid #c7cdd1; }
  .ctitle { margin-bottom: 5px; }
  .ratings { display: flex; border-right: 2px solid #c7cdd1; font-weight: 700; }
  .full, .none { padding: 12px 0 30px 10px; box-sizing: border-box; }
  .full { width: 94px; border-left: 1px solid #aaa; border-right: 2px solid #aaa; }
  .pts { display: flex; align-items: center; padding-left: 10px; }
  .total { height: 40px; line-height: 40px; text-align: right; padding-right: 10px; }

  aside { width: 340px; margin-left: 53px; }
  h2 { width: 230px; margin: -14px 0 0; height: 31px; line-height: 26px; font-size: 18px; font-weight: 700; border-bottom: 2px solid #c7cdd1; }
  .submitted { display: flex; gap: 3px; height: 31px; line-height: 33px; font-size: 20px; color: #444; }
  .submitted svg { margin-top: 9px; }
  .info { padding-left: 5px; white-space: nowrap; }
  .info > * { display: block; height: 26px; }
  .info > .grade { margin-top: 10px; }
  .info > .rub { display: flex; gap: 6px; }
  .rub svg { margin-top: 3px; }
  .info > .comments { margin-top: 17px; }

  .dock-shade { position: absolute; left: 0; right: 0; bottom: 0; height: 120px; overflow: hidden; pointer-events: none; }
  .dock-shade i { position: absolute; left: 84px; right: 84px; top: 128px; height: 120px; border-radius: 36px; box-shadow: 0 0 100px rgba(0, 0, 0, .26); }

  .dock {
    position: absolute; left: 80px; top: 1670px; width: 2720px; height: 120px; box-sizing: border-box; border-radius: 36px;
    border: 2px solid rgba(255, 255, 255, .2); padding-left: 4.500px; display: flex; background-clip: border-box; background-origin: border-box;
    background-image: linear-gradient(90deg, #5e5687 0, #5f5790 16%, #6456a0 32%, #6a58b6 45%, #7256ba 58%, #8a57d2 64%, #9655e0 68%, #9855e4 76%, #8557da 86%, #7656b6 100%);
  }
  .cell { width: 97.060px; height: 116px; flex: none; display: flex; justify-content: center; position: relative; }
  .icon { width: 72px; height: 72px; margin-top: 17px; overflow: visible; filter: drop-shadow(0 1px 2px rgba(0, 0, 0, .3)); }
  .cell.run::after { content: ""; position: absolute; bottom: 2px; left: 44.500px; width: 8px; height: 8px; border-radius: 50%; background: #0a0426; }
  .sep ~ .cell.run::after { background: #230467; }
  .sep { width: 2px; height: 88px; flex: none; margin: 14px 20.500px 0 22.500px; background: #5a21ab; }
  .second { margin: 14px 21.500px 0 20px; }
  .notice { position: absolute; left: 61px; top: 8px; width: 34px; height: 34px; border-radius: 50%; background: #e9514a; color: #fff; font-size: 20px; font-weight: 400; line-height: 34px; text-align: center; }
  .petal { mix-blend-mode: multiply; opacity: .88; }
  .month { font: 700 14px "Liberation Sans", sans-serif; fill: #fff; text-anchor: middle; }
  .day { font: 400 44px Inter, sans-serif; fill: #222; text-anchor: middle; }
  .tv { font: 500 27px Inter, sans-serif; fill: #fff; }
  .office { font: 700 19px "Open Sans", sans-serif; fill: #fff; text-anchor: middle; }
</style>
